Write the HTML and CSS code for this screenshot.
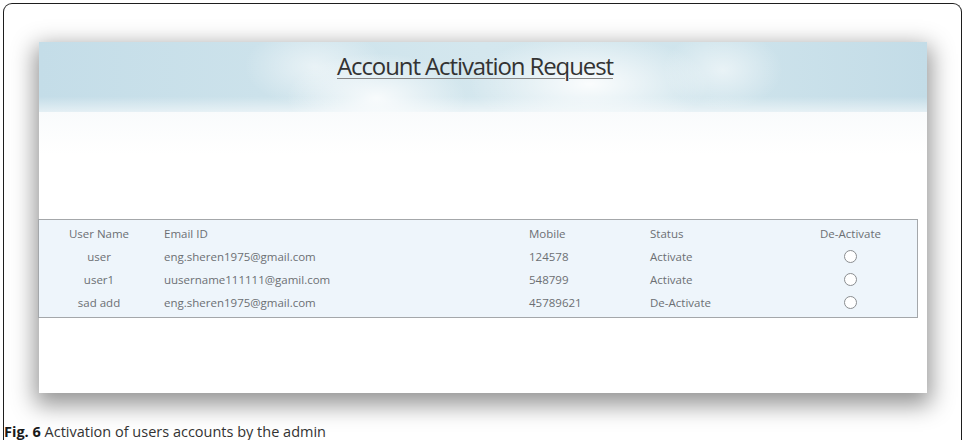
FILE: index.html
```html
<!DOCTYPE html>
<html>
<head>
<meta charset="utf-8">
<link rel="stylesheet" href="styles.css">
</head>
<body>
<div class="frame">
  <div class="panel">
    <div class="banner">
      <h1 class="title">Account Activation Request</h1>
    </div>
    <div class="space"></div>
    <div class="grid">
      <div class="c1 head">User Name</div>
      <div class="c2 head">Email ID</div>
      <div class="c3 head">Mobile</div>
      <div class="c4 head">Status</div>
      <div class="c5 head">De-Activate</div>

      <div class="c1">user</div>
      <div class="c2">eng.sheren1975@gmail.com</div>
      <div class="c3">124578</div>
      <div class="c4">Activate</div>
      <div class="c5"><span class="radio"></span></div>

      <div class="c1">user1</div>
      <div class="c2">uusername111111@gamil.com</div>
      <div class="c3">548799</div>
      <div class="c4">Activate</div>
      <div class="c5"><span class="radio"></span></div>

      <div class="c1">sad add</div>
      <div class="c2">eng.sheren1975@gmail.com</div>
      <div class="c3">45789621</div>
      <div class="c4">De-Activate</div>
      <div class="c5"><span class="radio"></span></div>
    </div>
  </div>
  <p class="caption"><b>Fig. 6</b> Activation of users accounts by the admin</p>
</div>
</body>
</html>
```

FILE: styles.css
```css
html, body {
  margin: 0;
  padding: 0;
  background: #fff;
  overflow: hidden;
}
.frame {
  margin: 3px 3px 0 3px;
  height: 437px;
  border: 1.5px solid #1e1e1e;
  border-bottom: none;
  border-radius: 9px 9px 0 0;
  padding: 38px 0 0 35px;
  box-sizing: border-box;
}
.panel {
  width: 888px;
  height: 351px;
  background: #fff;
  box-shadow: 0 8px 22px 4px rgba(0,0,0,0.42);
  display: flex;
  flex-direction: column;
}
.banner {
  height: 70px;
  display: flex;
  justify-content: center;
  padding-right: 16px;
  background:
    radial-gradient(ellipse 90px 45px at 38% 80%, rgba(255,255,255,0.85), rgba(255,255,255,0) 100%),
    radial-gradient(ellipse 70px 40px at 31% 35%, rgba(255,255,255,0.55), rgba(255,255,255,0) 100%),
    radial-gradient(ellipse 120px 50px at 62% 60%, rgba(255,255,255,0.9), rgba(255,255,255,0) 100%),
    radial-gradient(ellipse 60px 40px at 77% 40%, rgba(255,255,255,0.55), rgba(255,255,255,0) 100%),
    linear-gradient(to bottom, rgba(255,255,255,0) 78%, rgba(255,255,255,0.55) 100%),
    linear-gradient(to right, #c4dde8 0%, #cce2eb 25%, #d4e7ee 50%, #cfe4ec 75%, #c3dce7 100%);
}
.title {
  margin: 0;
  padding-top: 10px;
  font-family: "Open Sans", sans-serif;
  font-weight: normal;
  font-size: 24px;
  line-height: 28px;
  letter-spacing: -1.1px;
  color: #333;
  text-decoration: underline;
  text-decoration-thickness: 1px;
  text-underline-offset: 3px;
  text-decoration-color: #888;
}
.space {
  height: 107px;
  background: linear-gradient(to bottom, #f9fbfc, #fff 40%);
}
.grid {
  width: 878px;
  margin-left: -1px;
  border: 1px solid #a4a7aa;
  background: #eef5fb;
  display: grid;
  grid-template-columns: 120px 370px 121px 134px 1fr;
  grid-auto-rows: 23px;
  padding: 2px 0 3px 0;
  font-family: "Open Sans", sans-serif;
  font-size: 11.5px;
  color: #6c6f73;
}
.grid > div {
  display: flex;
  align-items: center;
  white-space: nowrap;
}
.c1 { justify-content: center; }
.c2 { padding-left: 5px; }
.c5 { justify-content: center; }
.radio {
  width: 11px;
  height: 11px;
  border: 1px solid #8a8d90;
  border-radius: 50%;
  background: #fff;
}
.caption {
  margin: 30px 0 0 -35px;
  font-family: "Open Sans", sans-serif;
  font-size: 14.5px;
  color: #333;
  line-height: 17px;
}
.caption b {
  color: #1a1a1a;
}
```
